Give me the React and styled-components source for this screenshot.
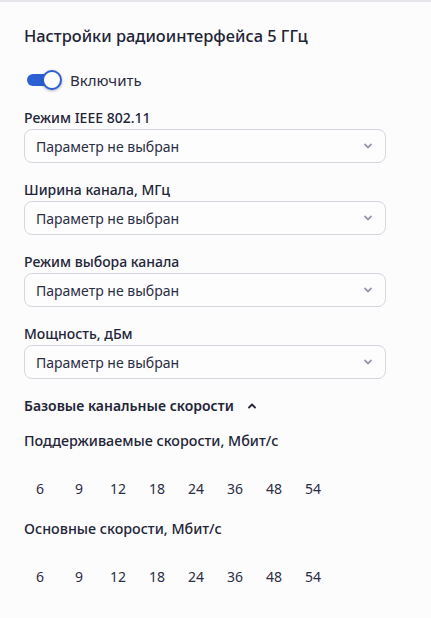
import { useState } from "react";
import styled, { createGlobalStyle } from "styled-components";

const GlobalStyle = createGlobalStyle`
  html, body {
    margin: 0;
    padding: 0;
    background: #fcfcfd;
  }
  body {
    font-family: "Noto Sans", "Open Sans", sans-serif;
    color: #252739;
  }
`;

const Panel = styled.section`
  box-sizing: border-box;
  width: 431px;
  min-height: 618px;
  border-top: 2px solid #e6e6ea;
  padding: 22px 45px 0 24px;
  background: #fcfcfd;
`;

const Title = styled.h2`
  margin: 0 0 22px;
  font-size: 16.4px;
  font-weight: 500;
  line-height: 24px;
  color: #222436;
`;

const SwitchRow = styled.label`
  display: flex;
  align-items: center;
  gap: 9px;
  margin: 0 0 18px 3px;
  font-size: 15px;
  line-height: 20px;
  color: #2b2d40;
  cursor: pointer;
`;

const Track = styled.span`
  position: relative;
  width: 28px;
  height: 12px;
  border-radius: 6px;
  background: ${(p) => (p.$on ? "#2c5fd1" : "#c4c6d0")};
  margin-right: 6px;
`;

const Knob = styled.span`
  position: absolute;
  top: -4px;
  left: ${(p) => (p.$on ? "15px" : "-3px")};
  width: 16px;
  height: 16px;
  border-radius: 50%;
  background: #fff;
  border: 2px solid #2c5fd1;
  box-shadow: 0 1px 3px rgba(20, 30, 60, 0.35);
`;

const Field = styled.div`
  display: flex;
  flex-direction: column;
  gap: 1px;
  margin-bottom: 17px;
`;

const Label = styled.div`
  font-size: 14px;
  font-weight: 500;
  line-height: 20px;
  color: #232537;
`;

const SelectBox = styled.div`
  box-sizing: border-box;
  height: 34px;
  display: flex;
  align-items: center;
  justify-content: space-between;
  padding: 0 11px;
  border: 1px solid #d6d6de;
  border-radius: 8px;
  background: #fdfdfe;
  font-size: 14px;
  color: #2b2d42;
`;

const Section = styled.div`
  display: flex;
  align-items: center;
  gap: 12px;
  margin-top: 7px;
  font-size: 14px;
  font-weight: 600;
  line-height: 20px;
  color: #232537;
`;

const SubTitle = styled.div`
  margin-top: ${(p) => p.$top}px;
  font-size: 14.3px;
  font-weight: 500;
  line-height: 20px;
  color: #232537;
`;

const Rates = styled.div`
  display: flex;
  gap: 7px;
  margin-top: ${(p) => p.$top}px;
`;

const Rate = styled.span`
  width: 32px;
  text-align: center;
  font-size: 14px;
  line-height: 20px;
  color: #2b2d42;
`;

const Chevron = ({ up }) => (
  <svg width="12" height="12" viewBox="0 0 12 12" fill="none">
    <path
      d={up ? "M3 7.5 L6 4.5 L9 7.5" : "M3 4.5 L6 7.5 L9 4.5"}
      stroke={up ? "#252739" : "#9a9cab"}
      strokeWidth="1.8"
      strokeLinecap="round"
      strokeLinejoin="round"
    />
  </svg>
);

const fields = [
  "Режим IEEE 802.11",
  "Ширина канала, МГц",
  "Режим выбора канала",
  "Мощность, дБм",
];

const rates = [6, 9, 12, 18, 24, 36, 48, 54];

export default function App() {
  const [on, setOn] = useState(true);

  return (
    <>
      <GlobalStyle />
      <Panel>
        <Title>Настройки радиоинтерфейса 5 ГГц</Title>
        <SwitchRow onClick={() => setOn(!on)}>
          <Track $on={on}>
            <Knob $on={on} />
          </Track>
          Включить
        </SwitchRow>
        {fields.map((f) => (
          <Field key={f}>
            <Label>{f}</Label>
            <SelectBox>
              Параметр не выбран
              <Chevron />
            </SelectBox>
          </Field>
        ))}
        <Section>
          Базовые канальные скорости
          <Chevron up />
        </Section>
        <SubTitle $top={15}>Поддерживаемые скорости, Мбит/с</SubTitle>
        <Rates $top={28}>
          {rates.map((r) => (
            <Rate key={r}>{r}</Rate>
          ))}
        </Rates>
        <SubTitle $top={20}>Основные скорости, Мбит/с</SubTitle>
        <Rates $top={28}>
          {rates.map((r) => (
            <Rate key={"b" + r}>{r}</Rate>
          ))}
        </Rates>
      </Panel>
    </>
  );
}
